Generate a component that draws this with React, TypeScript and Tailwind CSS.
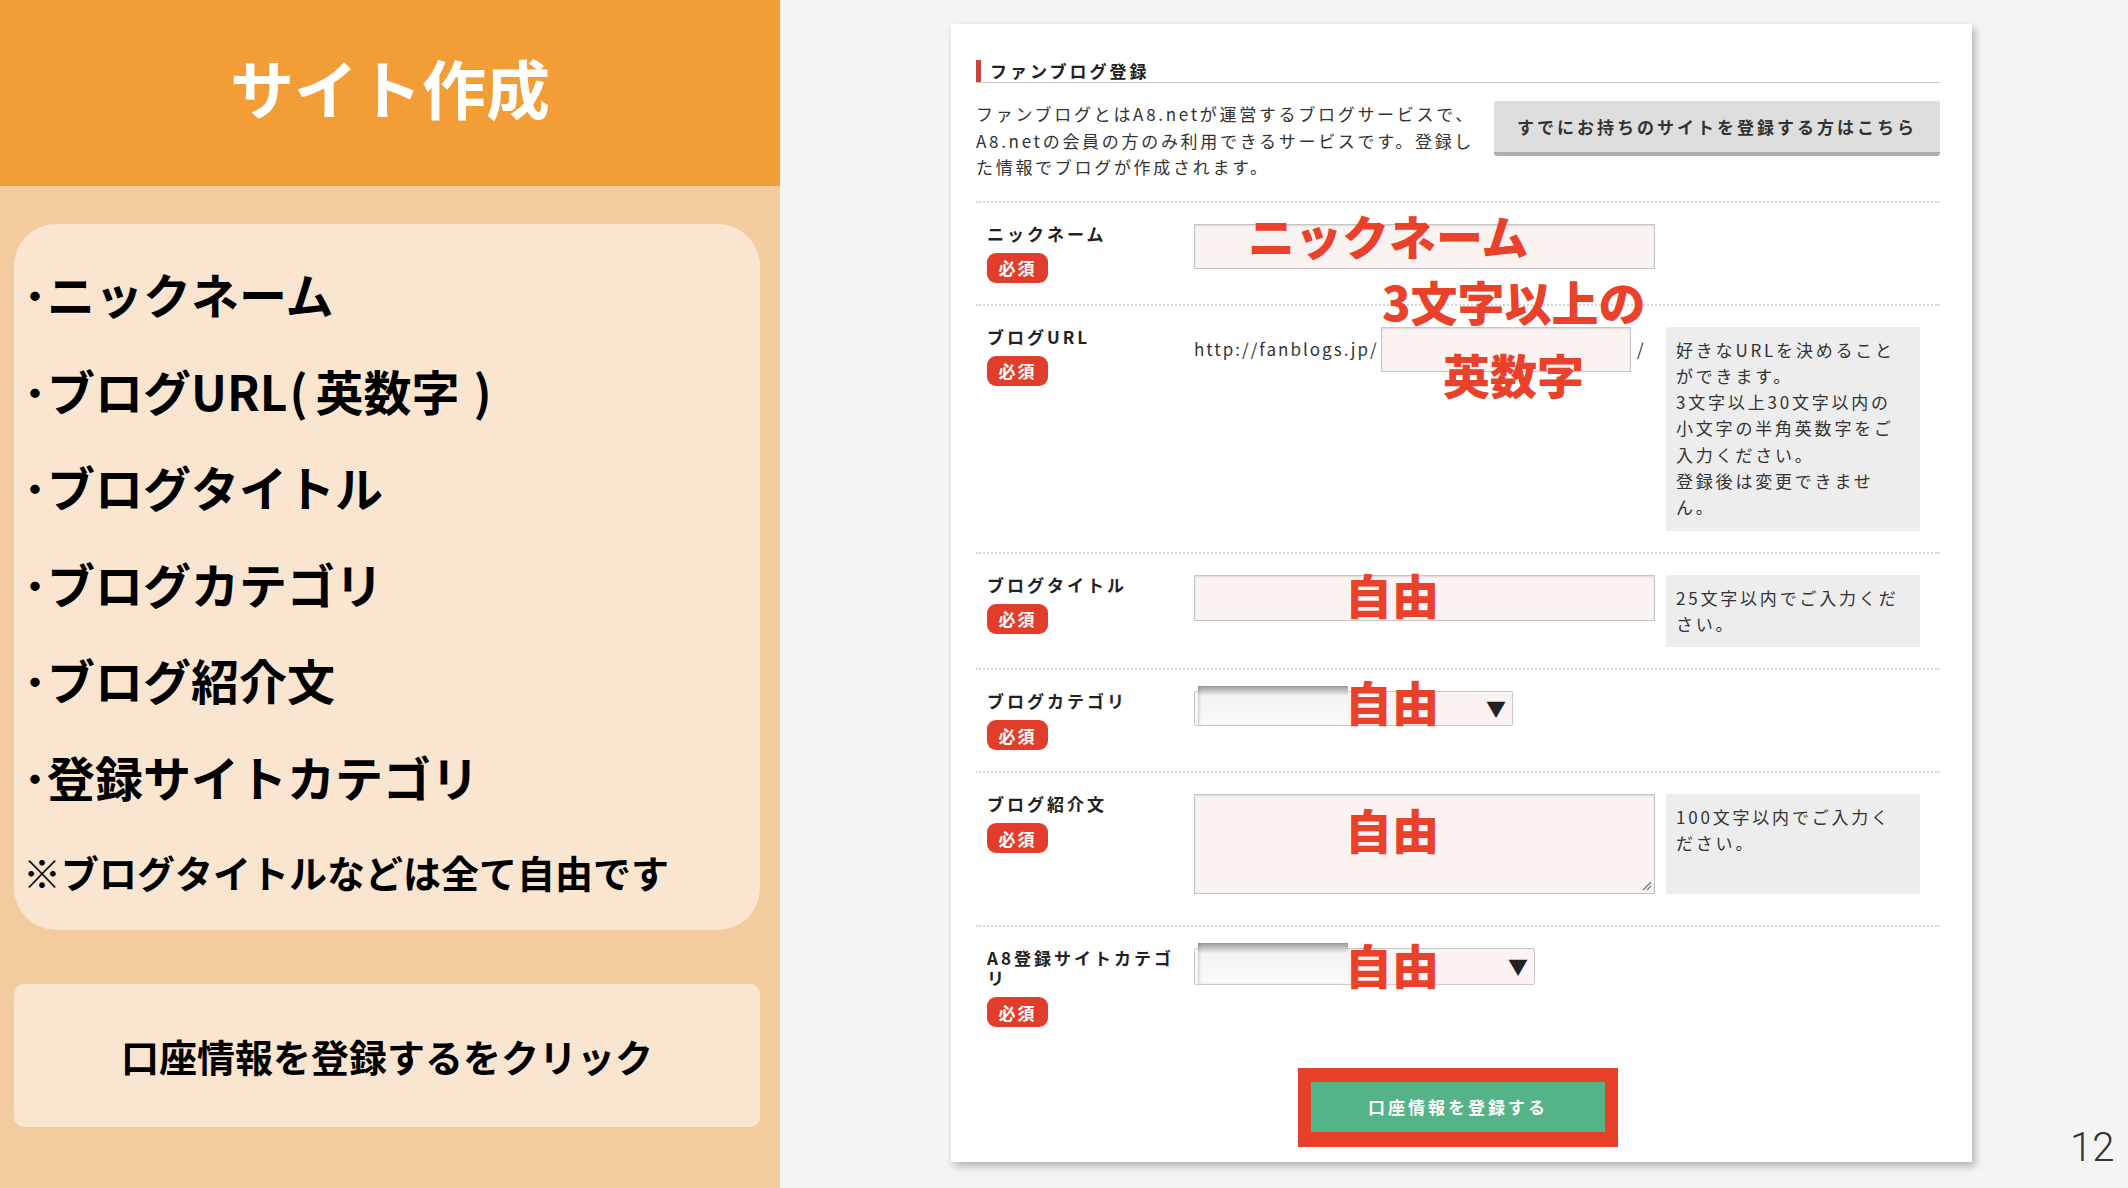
import React from "react";

const jp = "font-['Noto_Sans_CJK_JP','Noto_Sans',sans-serif]";

const listItems: React.ReactNode[] = [
  "ニックネーム",
  <>
    ブログURL<span className="ml-[2px] mr-[8px]">(</span>英数字<span className="ml-[14px]">)</span>
  </>,
  "ブログタイトル",
  "ブログカテゴリ",
  "ブログ紹介文",
  "登録サイトカテゴリ",
];

const LeftPanel = () => (
  <div className="w-[780px] shrink-0 bg-[#f2cb9f] flex flex-col">
    <div className="h-[186px] bg-[#f39d36] flex items-center justify-center pb-[14px]">
      <h1 className="text-white text-[64px] font-bold leading-none">サイト作成</h1>
    </div>

    <div className="ml-[14px] mr-[20px] mt-[38px] h-[706px] rounded-[42px] bg-[#fae6d0] pt-[21px] pl-[9px]">
      <ul className="text-black text-[48px] font-bold leading-[96.6px] whitespace-nowrap">
        {listItems.map((item, i) => (
          <li key={i}>
            <span>･</span>
            {item}
          </li>
        ))}
      </ul>
      <p className="mt-[17px] text-[38px] font-bold leading-[60px] text-black whitespace-nowrap">
        ※ブログタイトルなどは全て自由です
      </p>
    </div>

    <div className="ml-[14px] mr-[20px] mt-[54px] h-[143px] rounded-[10px] bg-[#fae6d0] flex items-center justify-center">
      <span className="text-[38px] font-bold text-black">口座情報を登録するをクリック</span>
    </div>
  </div>
);

// 必須 badge
const Badge = () => (
  <div className="mt-[9px] flex h-[30px] w-[61px] items-center justify-center rounded-[9px] bg-[#e23c2b] text-[17px] font-bold leading-none tracking-[2px] text-white">
    必須
  </div>
);

const HelpBox = ({ lines }: { lines: string[] }) => (
  <div className="ml-[11px] w-[254px] bg-[#ededed] px-[10px] py-[10px] text-[17px] leading-[26.3px] tracking-[2.8px] text-[#333] whitespace-nowrap">
    {lines.map((l, i) => (
      <div key={i}>{l}</div>
    ))}
  </div>
);

const TextBox = ({ className }: { className: string }) => (
  <div
    className={`border border-[#c6c6c6] bg-[#fbf3f2] shadow-[inset_0_1px_2px_rgba(0,0,0,0.12)] ${className}`}
  />
);

const SelectBox = ({ className, shadeWidth }: { className: string; shadeWidth: string }) => (
  <div className={`relative rounded-[2px] border border-[#c9c9c9] bg-[#fbf3f2] ${className}`}>
    <div
      className={`absolute left-[3px] -top-[6px] bottom-0 ${shadeWidth} bg-linear-to-b from-[#9a9a9a] via-[#f3f3f3] via-25% to-[#fbfbfb] shadow-[inset_2px_0_2px_rgba(0,0,0,0.12)]`}
    />
    <span className="absolute right-[6px] top-1/2 -translate-y-1/2 text-[20px] leading-none text-[#222]">
      ▼
    </span>
  </div>
);

const Row = ({
  label,
  children,
  help,
  last,
  extraPb,
}: {
  label: React.ReactNode;
  children: React.ReactNode;
  help?: string[];
  last?: boolean;
  extraPb?: boolean;
}) => (
  <div
    className={`flex border-t-2 border-dotted border-[#d6d6d6] pt-[21px] ${
      last ? "pb-0" : extraPb ? "pb-[31px]" : "pb-[21px]"
    }`}
  >
    <div className="w-[218px] shrink-0 pl-[11px]">
      <div className="text-[17px] font-bold leading-[20px] tracking-[3px] text-[#222] whitespace-nowrap">
        {label}
      </div>
      <Badge />
    </div>
    <div className="w-[461px] shrink-0">{children}</div>
    {help && <HelpBox lines={help} />}
  </div>
);

// red annotation text drawn over the form screenshot
const Note = ({ text, className }: { text: string; className: string }) => (
  <div
    className={`absolute text-[47px] font-black leading-none text-[#e9412a] whitespace-nowrap ${className}`}
  >
    {text}
  </div>
);

const FormCard = () => (
  <div className="relative h-[1138px] w-[1021px] shrink-0 bg-white pl-[25px] pr-[32px] pt-[36px] shadow-[3px_4px_8px_rgba(0,0,0,0.28)]">
    {/* heading */}
    <div className="flex h-[23px] border-b border-[#c9c9c9]">
      <span className="h-[22px] w-[5px] bg-[#c8453c]" />
      <span className="ml-[9px] text-[17px] font-bold leading-[22px] tracking-[3px] text-[#222]">
        ファンブログ登録
      </span>
    </div>

    <div className="mt-[18px] mb-[20px] flex items-start justify-between">
      <p className="text-[17px] leading-[26.5px] tracking-[2.7px] text-[#333] whitespace-nowrap">
        ファンブログとはA8.netが運営するブログサービスで、
        <br />
        A8.netの会員の方のみ利用できるサービスです。登録し
        <br />
        た情報でブログが作成されます。
      </p>
      <button className="flex h-[55px] w-[446px] items-center justify-center rounded-[3px] border-b-[4px] border-[#aeaeae] bg-[#dedede] text-[17px] font-bold tracking-[3px] text-[#333]">
        すでにお持ちのサイトを登録する方はこちら
      </button>
    </div>

    <Row label="ニックネーム">
      <TextBox className="h-[45px] w-[461px]" />
    </Row>

    <Row
      label="ブログURL"
      help={[
        "好きなURLを決めること",
        "ができます。",
        "3文字以上30文字以内の",
        "小文字の半角英数字をご",
        "入力ください。",
        "登録後は変更できませ",
        "ん。",
      ]}
    >
      <div className="flex h-[45px] items-center">
        <span className="w-[187px] text-[17px] tracking-[2px] text-[#333]">http://fanblogs.jp/</span>
        <TextBox className="h-[45px] w-[250px]" />
        <span className="ml-[6px] text-[17px] text-[#333]">/</span>
      </div>
    </Row>

    <Row label="ブログタイトル" help={["25文字以内でご入力くだ", "さい。"]}>
      <TextBox className="h-[46px] w-[461px]" />
    </Row>

    <Row label="ブログカテゴリ">
      <SelectBox className="h-[35px] w-[319px]" shadeWidth="w-[150px]" />
    </Row>

    <Row label="ブログ紹介文" help={["100文字以内でご入力く", "ださい。"]} extraPb>
      <div className="relative">
        <TextBox className="h-[100px] w-[461px]" />
        <svg className="absolute bottom-[3px] right-[3px]" width="11" height="11" viewBox="0 0 11 11">
          <path d="M10 2 L2 10 M10 6 L6 10" stroke="#777" strokeWidth="1.2" />
        </svg>
      </div>
    </Row>

    <Row
      label={
        <>
          A8登録サイトカテゴ
          <br />リ
        </>
      }
      last
    >
      <SelectBox className="h-[37px] w-[341px]" shadeWidth="w-[150px]" />
    </Row>

    <div className="mt-[41px] flex justify-center">
      <div className="bg-[#e8412b] pt-[14px] pb-[15px] px-[13px]">
        <div className="flex h-[50px] w-[294px] items-center justify-center bg-[#55b487] text-[17px] font-bold tracking-[3px] text-white">
          口座情報を登録する
        </div>
      </div>
    </div>

    <Note text="ニックネーム" className="left-[297px] top-[187px]" />
    <Note text="3文字以上の" className="left-[431px] top-[253px]" />
    <Note text="英数字" className="left-[492px] top-[326px]" />
    <Note text="自由" className="left-[394px] top-[546px]" />
    <Note text="自由" className="left-[394px] top-[653px]" />
    <Note text="自由" className="left-[394px] top-[781px]" />
    <Note text="自由" className="left-[394px] top-[916px]" />
  </div>
);

const RightPanel = () => (
  <div className="flex flex-1 items-start bg-[#f4f4f4] pl-[171px] pt-[24px]">
    <FormCard />
    <div className="ml-[98px] mt-[1104px] font-['Roboto',sans-serif] text-[40px] font-light leading-none text-[#333]">
      12
    </div>
  </div>
);

export default function App() {
  return (
    <div className={`flex h-[1188px] w-[2128px] overflow-hidden ${jp}`}>
      <LeftPanel />
      <RightPanel />
    </div>
  );
}
